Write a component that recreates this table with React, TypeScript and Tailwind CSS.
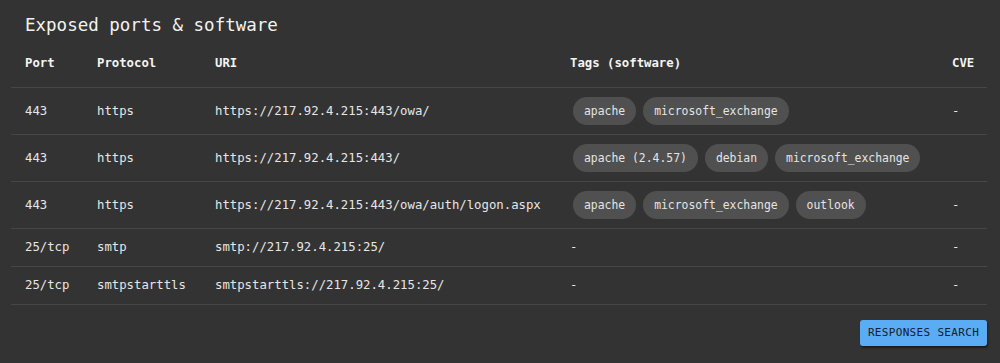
import React from "react";

interface PortRow {
  port: string;
  protocol: string;
  uri: string;
  tags: string[];
  cve: string;
}

const rows: PortRow[] = [
  { port: "443", protocol: "https", uri: "https://217.92.4.215:443/owa/", tags: ["apache", "microsoft_exchange"], cve: "-" },
  { port: "443", protocol: "https", uri: "https://217.92.4.215:443/", tags: ["apache (2.4.57)", "debian", "microsoft_exchange"], cve: "" },
  { port: "443", protocol: "https", uri: "https://217.92.4.215:443/owa/auth/logon.aspx", tags: ["apache", "microsoft_exchange", "outlook"], cve: "-" },
  { port: "25/tcp", protocol: "smtp", uri: "smtp://217.92.4.215:25/", tags: [], cve: "-" },
  { port: "25/tcp", protocol: "smtpstarttls", uri: "smtpstarttls://217.92.4.215:25/", tags: [], cve: "-" },
];

const mono = { fontFamily: '"DejaVu Sans Mono", "Liberation Mono", monospace' };

function Tag({ label }: { label: string }) {
  return (
    <span className="inline-flex items-center h-7 px-[11px] rounded-full bg-[#505050] text-[11.4px] text-[#e4e4e4]">
      {label}
    </span>
  );
}

export default function App() {
  return (
    <div className="w-[1000px] h-[363px] bg-[#333333] text-[#e6e6e6] pl-[11px] pr-[13px] pt-[13px]" style={mono}>
      <h2 className="pl-[14px] text-[17.5px] leading-6 text-[#f2f2f2]">Exposed ports &amp; software</h2>

      <table className="mt-[3px] w-full table-fixed border-collapse text-[12.3px]">
        <colgroup>
          <col className="w-[72px]" />
          <col className="w-[118px]" />
          <col className="w-[355px]" />
          <col className="w-[382px]" />
          <col />
        </colgroup>
        <thead>
          <tr className="border-b border-[#464646]">
            {["Port", "Protocol", "URI", "Tags (software)", "CVE"].map((h) => (
              <th key={h} className="pl-[14px] py-[13px] leading-[21px] text-left font-bold text-[#f4f4f4]">
                {h}
              </th>
            ))}
          </tr>
        </thead>
        <tbody>
          {rows.map((r, i) => (
            <tr key={i} className="border-b border-[#464646]">
              <td className="pl-[14px] py-2 leading-[21px]">{r.port}</td>
              <td className="pl-[14px] py-2 leading-[21px]">{r.protocol}</td>
              <td className="pl-[14px] py-2 leading-[21px] whitespace-nowrap">{r.uri}</td>
              <td className="pl-[14px] py-2 leading-[21px]">
                {r.tags.length > 0 ? (
                  <div className="flex gap-[7px] py-px pl-[3px]">
                    {r.tags.map((t) => (
                      <Tag key={t} label={t} />
                    ))}
                  </div>
                ) : (
                  "-"
                )}
              </td>
              <td className="pl-[14px] py-2 leading-[21px]">{r.cve}</td>
            </tr>
          ))}
        </tbody>
      </table>

      <div className="flex justify-end mt-[15px]">
        <button className="w-[127px] h-[26px] rounded-[3px] bg-[#5aacf4] text-[11px] tracking-[0.03em] text-[#13202c] shadow-[1px_2px_2px_rgba(0,0,0,0.45)]">
          RESPONSES SEARCH
        </button>
      </div>
    </div>
  );
}
